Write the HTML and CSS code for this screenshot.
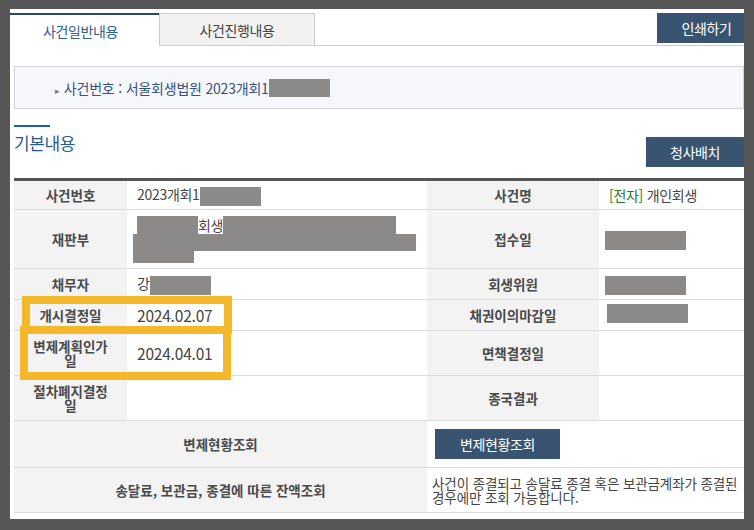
FILE: index.html
```html
<!DOCTYPE html>
<html lang="ko">
<head>
    <meta charset="UTF-8">
    <meta name="viewport" content="width=device-width, initial-scale=1.0">
    <title>사건일반내용</title>
    <link rel="stylesheet" href="styles.css">
</head>
<body>
    <div class="case-page">
        <div class="tab-bar">
            <div class="tab active">사건일반내용</div>
            <div class="tab">사건진행내용</div>
            <div class="tab-fill"></div>
            <button class="btn btn-print">인쇄하기</button>
        </div>

        <div class="case-content">
            <div class="case-title">
                <span class="bullet">&#9656;</span>사건번호 : 서울회생법원 2023개회1<span class="redact r-title"></span>
            </div>

            <div class="section-head">
                <h2>기본내용</h2>
                <button class="btn btn-map">청사배치</button>
            </div>

            <div class="table-wrap">
                <table class="info-table">
                    <colgroup>
                        <col style="width:113px">
                        <col style="width:300px">
                        <col style="width:172px">
                        <col style="width:145px">
                    </colgroup>
                    <tr class="h29">
                        <th>사건번호</th>
                        <td>2023개회1<span class="redact r-num"></span></td>
                        <th>사건명</th>
                        <td><span class="tag-e">[전자]</span> 개인회생</td>
                    </tr>
                    <tr class="h58">
                        <th>재판부</th>
                        <td>
                            <div class="court">
                                <div class="court-line"><span class="redact r-a"></span>회생<span class="redact r-b"></span></div>
                                <div class="redact r-c"></div>
                                <div class="redact r-d"></div>
                            </div>
                        </td>
                        <th>접수일</th>
                        <td><span class="redact r-side"></span></td>
                    </tr>
                    <tr class="h30">
                        <th>채무자</th>
                        <td>강<span class="redact r-name"></span></td>
                        <th>회생위원</th>
                        <td><span class="redact r-side"></span></td>
                    </tr>
                    <tr class="h30">
                        <th>개시결정일</th>
                        <td class="date">2024.02.07</td>
                        <th>채권이의마감일</th>
                        <td><span class="redact r-side r-up"></span></td>
                    </tr>
                    <tr class="h44">
                        <th>변제계획인가일</th>
                        <td class="date">2024.04.01</td>
                        <th>면책결정일</th>
                        <td></td>
                    </tr>
                    <tr class="h44">
                        <th>절차폐지결정일</th>
                        <td></td>
                        <th>종국결과</th>
                        <td></td>
                    </tr>
                    <tr class="h46">
                        <th colspan="2">변제현황조회</th>
                        <td colspan="2" class="btn-cell"><button class="btn btn-pay">변제현황조회</button></td>
                    </tr>
                    <tr class="h44">
                        <th colspan="2">송달료, 보관금, 종결에 따른 잔액조회</th>
                        <td colspan="2" class="note">사건이 종결되고 송달료 종결 혹은 보관금계좌가 종결된<br>경우에만 조회 가능합니다.</td>
                    </tr>
                </table>

                <div class="mark mark-open"></div>
                <div class="mark mark-plan"></div>
            </div>
        </div>
    </div>
</body>
</html>
```

FILE: styles.css
```css
body, html {
    margin: 0;
    padding: 0;
    background: #575757;
    font-family: 'Noto Sans CJK KR', 'Noto Sans', sans-serif;
    color: #444;
}

.case-page {
    margin: 9px 10px 0 10px;
    width: 734px;
    height: 510px;
    background: #fff;
    padding-top: 4px;
    box-sizing: border-box;
    overflow: hidden;
}

.tab-bar {
    display: flex;
    align-items: flex-start;
    height: 33px;
}

.tab {
    box-sizing: border-box;
    height: 33px;
    display: flex;
    align-items: center;
    justify-content: center;
    font-size: 14px;
    letter-spacing: -0.4px;
}

.tab.active {
    width: 149px;
    border-top: 2px solid #2b4763;
    color: #2f5d8e;
    background: #fff;
    padding-right: 8px;
}

.tab:not(.active) {
    width: 156px;
    background: #f2f2f2;
    border: 1px solid #ccc;
}

.tab-fill {
    flex: 1;
    height: 33px;
    box-sizing: border-box;
    border-bottom: 1px solid #ccc;
}

.btn {
    background: #385470;
    color: #fff;
    border: none;
    font-family: inherit;
    font-size: 14px;
    letter-spacing: -0.4px;
    cursor: pointer;
    padding: 0;
}

.btn-print {
    position: relative;
    margin-left: -87px;
    width: 87px;
    height: 30px;
    padding-left: 12px;
}

.case-content {
    padding-left: 4px;
}

.case-title {
    margin-top: 20px;
    height: 43px;
    box-sizing: border-box;
    background: #f6f7fb;
    border: 1px solid #d3d4dc;
    display: flex;
    align-items: center;
    padding-left: 40px;
    font-size: 14px;
    letter-spacing: -0.2px;
    color: #35527a;
}

.bullet {
    font-size: 9px;
    color: #777;
    margin-right: 4px;
    margin-top: 5px;
}

.redact {
    display: inline-block;
    background: #8c8a88;
    vertical-align: middle;
}

.r-title {
    width: 61px;
    height: 18px;
}

.section-head {
    display: flex;
    justify-content: space-between;
    align-items: flex-start;
    margin-top: 16px;
    height: 42px;
}

.section-head h2 {
    margin: 0;
    font-size: 17px;
    font-weight: normal;
    color: #2a5a8a;
    letter-spacing: -0.4px;
    line-height: 22px;
}

.section-head h2::before {
    content: "";
    display: block;
    width: 36px;
    height: 2px;
    background: #1f5fa8;
    margin-bottom: 5px;
}

.btn-map {
    margin-top: 12px;
    width: 98px;
    height: 30px;
}

.table-wrap {
    position: relative;
    margin-top: 11px;
}

.info-table {
    width: 730px;
    border-collapse: collapse;
    table-layout: fixed;
    border-top: 3px solid #555;
}

.info-table th,
.info-table td {
    padding: 0;
    border-bottom: 1px solid #dcdcdc;
}

.info-table th {
    background: #f3f3f3;
    font-size: 13.5px;
    font-weight: bold;
    color: #4a4a4a;
    line-height: 14px;
    padding: 0 14px;
    text-align: center;
}

.info-table td {
    font-size: 14px;
    padding-left: 10px;
    letter-spacing: -0.3px;
}

.h29 { height: 30px; }
.h30 { height: 31px; }
.h44 { height: 45px; }
.h46 { height: 47px; }
.h58 { height: 59px; }

.tag-e {
    color: #1d7a2d;
}

.r-num {
    width: 61px;
    height: 19px;
}

.r-name {
    width: 61px;
    height: 19px;
}

.r-side {
    width: 81px;
    height: 19px;
    margin-left: -4px;
}

.r-up {
    margin-left: -2px;
    position: relative;
    top: -3px;
}

.court {
    line-height: 18px;
}

.court-line {
    display: flex;
    height: 18px;
}

.r-a {
    width: 61px;
    height: 18px;
}

.r-b {
    width: 173px;
    height: 18px;
}

.r-c {
    display: block;
    width: 283px;
    height: 17px;
    margin-left: -4px;
}

.r-d {
    display: block;
    width: 61px;
    height: 12px;
    margin-left: -4px;
}

.info-table td.date {
    font-size: 15.5px;
    letter-spacing: -0.2px;
}

.info-table td.btn-cell {
    padding-left: 8px;
}

.btn-pay {
    width: 125px;
    height: 30px;
}

.info-table td.note {
    font-size: 13.5px;
    line-height: 14px;
    padding-left: 5px;
    letter-spacing: -0.1px;
}

.mark {
    position: absolute;
    border: 8px solid #f6b82b;
    box-sizing: border-box;
}

.mark-open {
    left: 8px;
    top: 118px;
    width: 210px;
    height: 38px;
}

.mark-plan {
    left: 6px;
    top: 148px;
    width: 211px;
    height: 54px;
}
```
